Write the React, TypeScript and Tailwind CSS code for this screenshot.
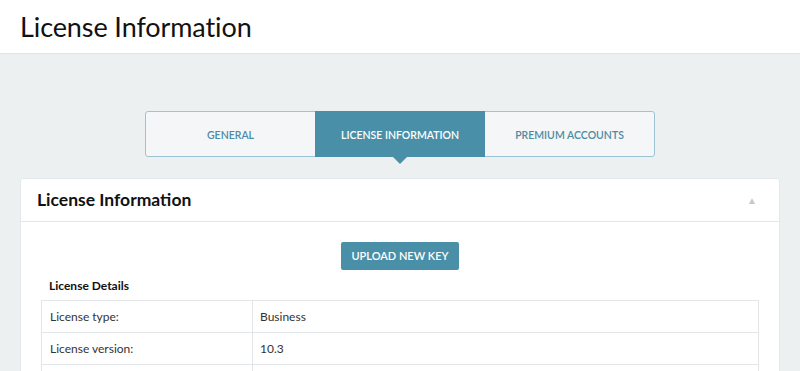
import React from "react";

export default function App() {
  const font = { fontFamily: "Lato, 'Open Sans', sans-serif" };
  return (
    <div className="w-[800px] h-[371px] overflow-hidden bg-[#ecf0f1]" style={font}>
      <div className="h-[54px] bg-white border-b border-[#dfe4e6] flex items-center pl-[20px]">
        <h1 className="text-[27px] text-[#111] leading-none tracking-[-0.1px]">License Information</h1>
      </div>
      <div className="flex justify-center pt-[57px]">
        <div className="flex h-[46px] w-[510px] border border-[#9cc4d4] rounded-[3px] bg-[#f4f6f8] text-[10.5px] font-semibold">
          <div className="flex-1 flex items-center justify-center pt-[3px] text-[#4d8ba2]">GENERAL</div>
          <div className="relative w-[170px] -my-px flex items-center justify-center pt-[3px] bg-[#4a8fa8] text-white">
            LICENSE INFORMATION
            <div className="absolute left-1/2 -translate-x-1/2 top-full w-0 h-0 border-l-[7px] border-r-[7px] border-t-[7px] border-l-transparent border-r-transparent border-t-[#4a8fa8]" />
          </div>
          <div className="flex-1 flex items-center justify-center pt-[3px] text-[#4d8ba2]">PREMIUM ACCOUNTS</div>
        </div>
      </div>
      <div className="mx-[20px] mt-[21px] bg-white rounded-[3px] border border-[#e3e8ea]">
        <div className="h-[43px] flex items-center justify-between pl-[16px] pr-[22px] border-b border-[#e3e8ea]">
          <span className="text-[17.5px] font-bold text-[#111]">License Information</span>
          <span className="text-[10px] text-[#c8c8c8]">▲</span>
        </div>
        <div className="px-[20px] pt-[20px]">
          <div className="flex justify-center">
            <button className="h-[28px] w-[118px] rounded-[2px] bg-[#4a8fa8] text-white text-[11px] font-semibold">UPLOAD NEW KEY</button>
          </div>
          <div className="pl-[8px] mt-[8px] text-[12px] font-bold text-[#111] leading-[16px]">License Details</div>
          <table className="mt-[6px] w-full border-collapse text-[12px] text-[#333]">
            <tbody>
              <tr className="h-[32px]">
                <td className="w-[211px] border border-[#e3e6e8] pl-[8px]">License type:</td>
                <td className="border border-[#e3e6e8] pl-[7px]">Business</td>
              </tr>
              <tr className="h-[32px]">
                <td className="border border-[#e3e6e8] pl-[8px]">License version:</td>
                <td className="border border-[#e3e6e8] pl-[7px]">10.3</td>
              </tr>
              <tr className="h-[32px]">
                <td className="border border-[#e3e6e8] pl-[8px]">&nbsp;</td>
                <td className="border border-[#e3e6e8] pl-[7px]">&nbsp;</td>
              </tr>
            </tbody>
          </table>
        </div>
      </div>
    </div>
  );
}
